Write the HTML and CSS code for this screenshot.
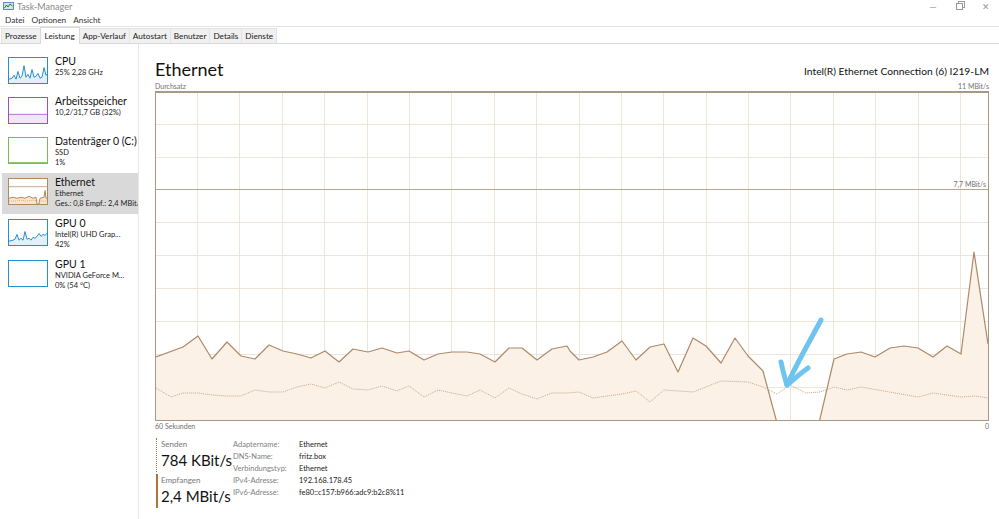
FILE: index.html
```html
<!DOCTYPE html>
<html lang="de">
<head>
  <meta charset="UTF-8">
  <title>Task-Manager</title>
  <link rel="stylesheet" href="styles.css">
</head>
<body>
<div class="window">
  <div class="titlebar">
    <svg class="app-icon" width="11" height="9" viewBox="0 0 11 9">
      <rect x="0.5" y="0.5" width="10" height="7" fill="#cfe3f3" stroke="#5a8fbf"/>
      <polyline points="1.5,6 3.5,3 5,5 7,2 9.5,4" fill="none" stroke="#2e7d32" stroke-width="1"/>
    </svg>
    <span class="app-name">Task-Manager</span>
    <div class="controls">
      <span class="ctl">&#8212;</span>
      <span class="ctl restore"></span>
      <span class="ctl">&#10005;</span>
    </div>
  </div>

  <div class="menubar">
    <span>Datei</span>
    <span>Optionen</span>
    <span>Ansicht</span>
  </div>

  <div class="tabbar">
    <div class="tab">Prozesse</div>
    <div class="tab active">Leistung</div>
    <div class="tab">App-Verlauf</div>
    <div class="tab">Autostart</div>
    <div class="tab">Benutzer</div>
    <div class="tab">Details</div>
    <div class="tab">Dienste</div>
  </div>

  <div class="main">
    <div class="sidebar">
      <div class="item">
        <svg class="thumb cpu" viewBox="0 0 38 26" preserveAspectRatio="none">
          <polygon points="0,26 0,22 3,21 5,18 7,22 9,14 11,21 13,19 15,8 17,20 19,17 21,21 23,12 25,20 27,19 29,16 31,21 33,20 35,10 37,18 38,17 38,26" fill="#e3f0f9"/>
          <polyline points="0,22 3,21 5,18 7,22 9,14 11,21 13,19 15,8 17,20 19,17 21,21 23,12 25,20 27,19 29,16 31,21 33,20 35,10 37,18 38,17" fill="none" stroke="#2a8ccb" stroke-width="1"/>
        </svg>
        <div class="info">
          <div class="name">CPU</div>
          <div class="sub">25% 2,28 GHz</div>
        </div>
      </div>
      <div class="item">
        <svg class="thumb mem" viewBox="0 0 38 26" preserveAspectRatio="none">
          <rect x="0" y="17" width="38" height="9" fill="#f2e6f4"/>
          <line x1="0" y1="17" x2="38" y2="17" stroke="#b46fc4" stroke-width="1"/>
        </svg>
        <div class="info">
          <div class="name">Arbeitsspeicher</div>
          <div class="sub">10,2/31,7 GB (32%)</div>
        </div>
      </div>
      <div class="item">
        <svg class="thumb disk" viewBox="0 0 38 26" preserveAspectRatio="none">
          <polyline points="0,25.5 38,25.5" fill="none" stroke="#8cc46a" stroke-width="1"/>
        </svg>
        <div class="info">
          <div class="name">Datenträger 0 (C:)</div>
          <div class="sub">SSD</div>
          <div class="sub">1%</div>
        </div>
      </div>
      <div class="item selected">
        <svg class="thumb eth" viewBox="0 0 38 26" preserveAspectRatio="none">
          <line x1="0" y1="8" x2="38" y2="8" stroke="#c9a886" stroke-width="1"/>
          <polygon points="0,26 0,20 4,19 8,20 12,19 16,20 20,18 24,20 27,19 28,26 30,26 31,20 35,19 36,12 37,20 38,20 38,26" fill="#f8e4d2"/>
          <polyline points="0,20 4,19 8,20 12,19 16,20 20,18 24,20 27,19 28,26 30,26 31,20 35,19 36,12 37,20 38,20" fill="none" stroke="#b4875c" stroke-width="1"/>
          <polyline points="0,23 6,23 12,22 18,23 24,22 30,23 38,23" fill="none" stroke="#c89d74" stroke-width="0.8" stroke-dasharray="1 1"/>
        </svg>
        <div class="info">
          <div class="name">Ethernet</div>
          <div class="sub">Ethernet</div>
          <div class="sub">Ges.: 0,8 Empf.: 2,4 MBit/s</div>
        </div>
      </div>
      <div class="item">
        <svg class="thumb gpu" viewBox="0 0 38 26" preserveAspectRatio="none">
          <polygon points="0,26 0,22 4,21 6,20 8,15 10,21 12,19 14,21 16,12 18,20 20,19 22,21 24,18 26,19 28,17 30,14 32,17 34,15 36,16 38,14 38,26" fill="#e3f0f9"/>
          <polyline points="0,22 4,21 6,20 8,15 10,21 12,19 14,21 16,12 18,20 20,19 22,21 24,18 26,19 28,17 30,14 32,17 34,15 36,16 38,14" fill="none" stroke="#2a8ccb" stroke-width="1"/>
        </svg>
        <div class="info">
          <div class="name">GPU 0</div>
          <div class="sub">Intel(R) UHD Grap...</div>
          <div class="sub">42%</div>
        </div>
      </div>
      <div class="item">
        <svg class="thumb gpu" viewBox="0 0 38 26" preserveAspectRatio="none"></svg>
        <div class="info">
          <div class="name">GPU 1</div>
          <div class="sub">NVIDIA GeForce M...</div>
          <div class="sub">0% (54 °C)</div>
        </div>
      </div>
    </div>

    <div class="content">
      <div class="head">
        <h1>Ethernet</h1>
        <div class="adapter">Intel(R) Ethernet Connection (6) I219-LM</div>
      </div>
      <div class="axis">
        <span>Durchsatz</span>
        <span>11 MBit/s</span>
      </div>

      <div class="graph">
        <svg width="832" height="327" viewBox="156 94 832 327">
          <g stroke="#efe4d8" stroke-width="1">
            <line x1="197.5" y1="90" x2="197.5" y2="425"/>
            <line x1="239.5" y1="90" x2="239.5" y2="425"/>
            <line x1="282.5" y1="90" x2="282.5" y2="425"/>
            <line x1="324.5" y1="90" x2="324.5" y2="425"/>
            <line x1="367.5" y1="90" x2="367.5" y2="425"/>
            <line x1="409.5" y1="90" x2="409.5" y2="425"/>
            <line x1="451.5" y1="90" x2="451.5" y2="425"/>
            <line x1="494.5" y1="90" x2="494.5" y2="425"/>
            <line x1="536.5" y1="90" x2="536.5" y2="425"/>
            <line x1="579.5" y1="90" x2="579.5" y2="425"/>
            <line x1="621.5" y1="90" x2="621.5" y2="425"/>
            <line x1="663.5" y1="90" x2="663.5" y2="425"/>
            <line x1="706.5" y1="90" x2="706.5" y2="425"/>
            <line x1="748.5" y1="90" x2="748.5" y2="425"/>
            <line x1="790.5" y1="90" x2="790.5" y2="425"/>
            <line x1="833.5" y1="90" x2="833.5" y2="425"/>
            <line x1="875.5" y1="90" x2="875.5" y2="425"/>
            <line x1="918.5" y1="90" x2="918.5" y2="425"/>
            <line x1="960.5" y1="90" x2="960.5" y2="425"/>
            <line x1="150" y1="125.5" x2="995" y2="125.5"/>
            <line x1="150" y1="158.5" x2="995" y2="158.5"/>
            <line x1="150" y1="223.5" x2="995" y2="223.5"/>
            <line x1="150" y1="256.5" x2="995" y2="256.5"/>
            <line x1="150" y1="289.5" x2="995" y2="289.5"/>
            <line x1="150" y1="322.5" x2="995" y2="322.5"/>
            <line x1="150" y1="355.5" x2="995" y2="355.5"/>
            <line x1="150" y1="388.5" x2="995" y2="388.5"/>
          </g>
          <line x1="150" y1="190.5" x2="995" y2="190.5" stroke="#b9a690" stroke-width="1"/>

          <polygon class="fill" points="156,423 156,358 183,348 198,337 212,360 227,343 241,357 255,360 269,346 283,352 297,355 311,359 325,352 339,363 353,350 368,353 382,349 397,354 409,352 424,361 438,355 452,353 467,353 480,355 495,363 509,349 522,349 537,361 552,350 567,347 570,352 579,361 593,358 607,353 622,342 636,361 650,348 664,345 678,373 693,339 706,347 721,364 735,339 748,357 763,372 777,424 819,424 834,360 847,355 861,353 875,358 890,349 904,347 918,349 933,358 947,347 961,355 974,253 988,345 988,423"/>
          <polyline class="recv" points="156,358 183,348 198,337 212,360 227,343 241,357 255,360 269,346 283,352 297,355 311,359 325,352 339,363 353,350 368,353 382,349 397,354 409,352 424,361 438,355 452,353 467,353 480,355 495,363 509,349 522,349 537,361 552,350 567,347 570,352 579,361 593,358 607,353 622,342 636,361 650,348 664,345 678,373 693,339 706,347 721,364 735,339 748,357 763,372 777,424 819,424 834,360 847,355 861,353 875,358 890,349 904,347 918,349 933,358 947,347 961,355 974,253 988,345"/>
          <polyline class="send" points="156,389 171,398 183,394 198,394 212,396 227,397 241,397 255,391 269,393 283,393 297,388 311,385 325,389 339,383 353,390 368,391 382,387 397,392 409,387 424,398 438,391 452,394 467,397 480,391 495,399 509,389 522,395 537,400 552,394 567,394 579,393 593,399 622,395 636,392 650,403 664,391 693,393 706,388 721,382 748,383 763,388 777,395 790,386 806,394 820,393 834,388 847,391 861,388 918,398 933,394 961,398 975,397 988,399"/>

          <g class="arrow">
            <path d="M821,321 C812,338 798,362 787,386"/>
            <path d="M781,363 C783,372 785,380 787,386 C794,380 801,374 808,369"/>
          </g>
        </svg>
        <span class="mark">7,7 MBit/s</span>
      </div>

      <div class="axis bottom">
        <span>60 Sekunden</span>
        <span>0</span>
      </div>

      <div class="details">
        <div class="stats">
          <div class="stat send-stat">
            <div class="label">Senden</div>
            <div class="value">784 KBit/s</div>
          </div>
          <div class="stat recv-stat">
            <div class="label">Empfangen</div>
            <div class="value">2,4 MBit/s</div>
          </div>
        </div>
        <div class="props">
          <div class="key">Adaptername:</div><div class="val">Ethernet</div>
          <div class="key">DNS-Name:</div><div class="val">fritz.box</div>
          <div class="key">Verbindungstyp:</div><div class="val">Ethernet</div>
          <div class="key">IPv4-Adresse:</div><div class="val">192.168.178.45</div>
          <div class="key">IPv6-Adresse:</div><div class="val">fe80::c157:b966:adc9:b2c8%11</div>
        </div>
      </div>
    </div>
  </div>
</div>
</body>
</html>
```

FILE: styles.css
```css
* { box-sizing: border-box; }
body {
  margin: 0;
  background: #fff;
  font-family: Lato, "Noto Sans", sans-serif;
  color: #1a1a1a;
}

.window {
  width: 999px;
  height: 519px;
  overflow: hidden;
}

/* title + menu */
.titlebar {
  height: 13px;
  display: flex;
  align-items: center;
  padding-left: 3px;
}
.app-icon { margin-right: 3px; }
.app-name {
  font-size: 9px;
  color: #8a8a8a;
}
.controls {
  margin-left: auto;
  display: flex;
  align-items: center;
  gap: 18px;
  padding-right: 8px;
  color: #999;
  font-size: 9px;
}
.ctl { width: 10px; text-align: center; }
.restore {
  width: 7px;
  height: 7px;
  border: 1px solid #999;
  box-shadow: 2px -2px 0 -1px #fff, 2px -2px 0 0 #999;
}

.menubar {
  height: 14px;
  display: flex;
  gap: 7px;
  align-items: center;
  padding-left: 5px;
  font-size: 8.3px;
  color: #333;
  border-bottom: 1px solid #e3e3e3;
}

.tabbar {
  height: 17px;
  display: flex;
  align-items: flex-end;
  border-bottom: 1px solid #d9d9d9;
  padding-left: 1px;
}
.tab {
  height: 15px;
  padding: 0 3px;
  font-size: 8.2px;
  line-height: 15px;
  color: #222;
  background: #f0f0f0;
  border: 1px solid #e2e2e2;
  border-bottom: none;
  margin-right: -1px;
}
.tab.active {
  height: 17px;
  line-height: 16px;
  padding: 0 4px;
  background: #fff;
  border-color: #d9d9d9;
  margin-bottom: -1px;
  position: relative;
  z-index: 1;
}

.main {
  display: flex;
  height: 475px;
}

/* sidebar */
.sidebar {
  width: 139px;
  border-right: 1px solid #e8e8e8;
  padding: 8px 0 0 2px;
  display: flex;
  flex-direction: column;
}
.item {
  display: flex;
  align-items: flex-start;
  padding: 5px 0 5px 6px;
  min-height: 40px;
  white-space: nowrap;
  overflow: hidden;
}
.item.selected { background: #d9d9d9; }
.thumb {
  width: 40px;
  height: 27px;
  flex: none;
  background: #fff;
  border: 1px solid #2a8ccb;
}
.thumb.mem { border-color: #a24fb6; }
.thumb.disk { border-color: #7ab758; }
.thumb.eth { border-color: #b0885f; }
.info {
  margin-left: 7px;
  margin-top: -2px;
}
.name {
  font-size: 10.5px;
  line-height: 13px;
  color: #111;
}
.sub {
  font-size: 7.5px;
  line-height: 10px;
  color: #222;
}

/* content */
.content {
  flex: 1;
  padding: 10px 10px 0 16px;
}
.head {
  display: flex;
  justify-content: space-between;
  align-items: flex-end;
  height: 27px;
}
h1 {
  margin: 0;
  font-size: 18px;
  font-weight: 400;
  line-height: 24px;
  color: #111;
}
.adapter {
  font-size: 10.3px;
  line-height: 16px;
  padding-bottom: 2px;
  color: #111;
}
.axis {
  display: flex;
  justify-content: space-between;
  font-size: 7px;
  line-height: 10px;
  color: #707070;
}
.axis.bottom { height: 13px; line-height: 11px; }

.graph {
  position: relative;
  width: 834px;
  height: 330px;
  border: 1px solid #a99882;
  border-top-width: 2px;
}
.graph svg { display: block; }
.fill { fill: #fcf1e7; }
.recv {
  fill: none;
  stroke: #ab8a68;
  stroke-width: 1.2;
  stroke-linejoin: round;
}
.send {
  fill: none;
  stroke: #c9a686;
  stroke-width: 1;
  stroke-dasharray: 1 1;
}
.arrow path {
  fill: none;
  stroke: #6fc4ef;
  stroke-width: 5;
  stroke-linecap: round;
  stroke-linejoin: round;
}
.mark {
  position: absolute;
  right: 2px;
  top: 87px;
  font-size: 7px;
  color: #707070;
}

/* details */
.details {
  display: flex;
  padding-top: 4px;
}
.stats {
  width: 78px;
  padding-left: 1px;
  white-space: nowrap;
}
.stat {
  padding-left: 4px;
  height: 34px;
}
.send-stat { border-left: 1px dotted #a57a4e; }
.recv-stat { border-left: 2px solid #a9743f; margin-top: 2px; padding-left: 3px; }
.label {
  font-size: 8px;
  line-height: 12px;
  color: #777;
}
.value {
  font-size: 15px;
  line-height: 20px;
  color: #111;
}
.props {
  display: grid;
  grid-template-columns: 66px auto;
  grid-auto-rows: 12px;
  padding-top: 1px;
  font-size: 7.5px;
  line-height: 12px;
  white-space: nowrap;
}
.key { color: #808080; }
.val { color: #222; }
```
